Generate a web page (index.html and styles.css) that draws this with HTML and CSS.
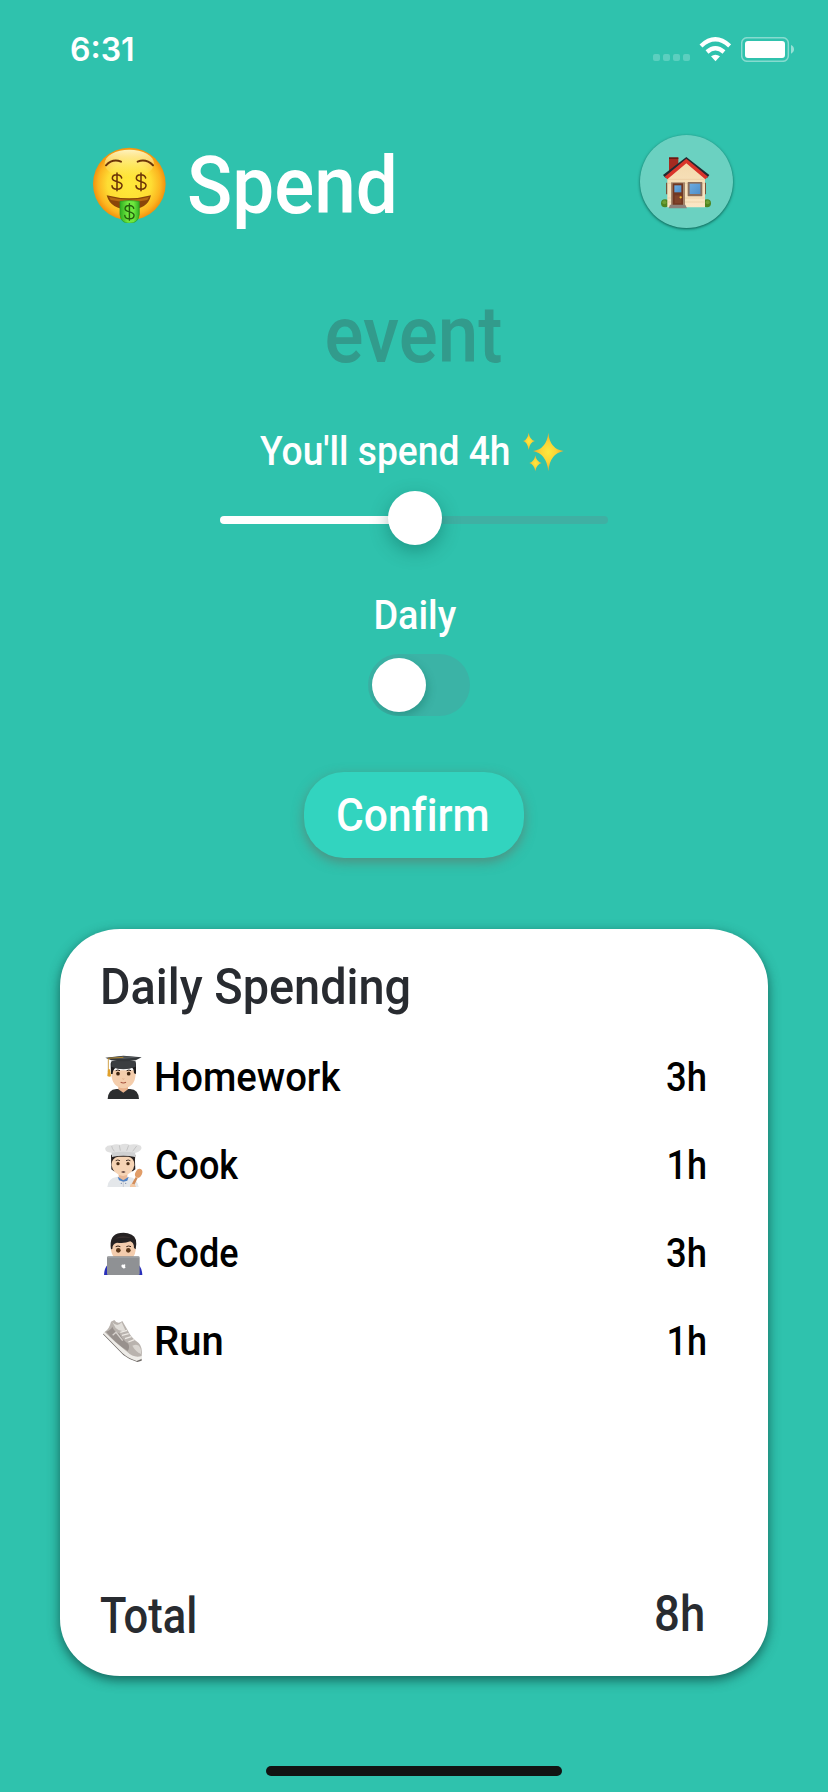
FILE: index.html
```html
<!DOCTYPE html>
<html lang="en">
<head>
<meta charset="utf-8">
<title>Spend</title>
<link rel="stylesheet" href="styles.css">
</head>
<body>
<div class="screen">
  <div class="status">
    <span class="time">6:31</span>
    <div class="indicators">
      <div class="dots"><i></i><i></i><i></i><i></i></div>
      <svg class="wifi" viewBox="237 50 98 75" fill="none" stroke="#fff" stroke-width="13">
        <path d="M243 77Q286 37 329 77"/><path d="M261 95Q286 73 312 95"/>
        <path d="M273 108Q286 99 300 108L286.500 123Z" fill="#fff" stroke="none"/>
      </svg>
      <svg class="battery" viewBox="363 51 160 75">
        <rect x="365" y="53" width="140" height="71" rx="17" fill="none" stroke="#fff" stroke-opacity=".42" stroke-width="4.500"/>
        <rect x="375" y="63" width="120" height="51" rx="9" fill="#fff"/>
        <path d="M513 75Q522 79 522 88T513 101Z" fill="#fff" fill-opacity=".5"/>
      </svg>
    </div>
  </div>

  <header class="header">
    <svg class="face" viewBox="98 50 220 230">
      <defs>
        <radialGradient id="skin" cx=".5" cy=".5" r=".5"><stop offset="0" stop-color="#ffe93a"/><stop offset=".6" stop-color="#fedd33"/><stop offset=".86" stop-color="#fcb41f"/><stop offset="1" stop-color="#f2920d"/></radialGradient>
        <linearGradient id="shine" x2="0" y2="1"><stop offset="0" stop-color="#fff8c8" stop-opacity=".95"/><stop offset="1" stop-color="#fff27a" stop-opacity="0"/></linearGradient>
        <linearGradient id="bill" x2="1" y2="0"><stop offset="0" stop-color="#2fae22"/><stop offset=".4" stop-color="#6fe83e"/><stop offset=".7" stop-color="#6fe83e"/><stop offset="1" stop-color="#2fae22"/></linearGradient>
      </defs>
      <circle cx="207" cy="161" r="109" fill="url(#skin)"/>
      <ellipse cx="207" cy="100" rx="74" ry="42" fill="url(#shine)"/>
      <path d="M137 105Q157 84 182 94M232 94Q257 84 278 105" fill="none" stroke="#6c3508" stroke-width="6" stroke-linecap="round"/>
      <path d="M139 195Q207 213 272 195Q262 238 207 238Q151 238 139 195Z" fill="#8a4609"/>
      <path d="M146 200Q207 216 266 200L261 209Q207 221 151 209Z" fill="#b56a12"/>
      <path d="M179 213Q207 208 237 213V252Q234 279 207 279Q181 279 179 252Z" fill="url(#bill)" stroke="#2a9d22" stroke-width="2"/>
      <g fill="none" stroke="#6b3307" stroke-width="4.600" stroke-linecap="round">
        <path id="dollar" d="M184 143C181 130 156 130 156 144C156 157 185 151 185 165C185 181 156 180 155 166M170 128V181"/>
        <use href="#dollar" x="72"/>
        <use href="#dollar" transform="translate(50 102) scale(.925)" stroke="#24600e"/>
      </g>
    </svg>
    <h1 class="title t">Spend</h1>
    <div class="home">
      <svg class="house" viewBox="120 410 156 160">
        <defs><linearGradient id="wall" x2="0" y2="1"><stop offset="0" stop-color="#f3d9ac"/><stop offset="1" stop-color="#fae6c5"/></linearGradient>
        <linearGradient id="pane" x2="1" y2="1"><stop offset="0" stop-color="#6cabe0"/><stop offset="1" stop-color="#4e8fcb"/></linearGradient></defs>
        <path d="M147 415H175V440L147 462Z" fill="#a52b20"/><path d="M147 414H175V419H147Z" fill="#6b1912"/>
        <circle cx="135" cy="552" r="12" fill="#4f8420"/><circle cx="261" cy="552" r="12" fill="#4f8420"/><circle cx="133" cy="549" r="6" fill="#6d9f35"/><circle cx="263" cy="549" r="6" fill="#6d9f35"/>
        <path d="M138 490H143V525H138ZM254 490H258V525H254Z" fill="#75543c"/>
        <path d="M142 470L199 424L255 470V564H142Z" fill="url(#wall)"/>
        <path d="M143 480H254M143 492H254M143 536H254M143 548H254" stroke="#e2c394" stroke-width="1.500"/>
        <path d="M129 467L199 413L268 467L262 475L199 423L136 475Z" fill="#222a31"/>
        <path d="M134 472L199 418L264 472L256 480L199 432L142 480Z" fill="#d9342b"/>
        <path d="M153 489H195V560H153Z" fill="#a3846a"/><path d="M158 492H189V557H158Z" fill="#713822"/>
        <path d="M163 498H184V519H163Z" fill="url(#pane)"/><path d="M164 528H184V552H164Z" fill="#81432a"/>
        <circle cx="182" cy="534" r="3.500" fill="#f6c331"/><path d="M150 556H196L201 567H146Z" fill="#8d817a"/>
        <rect x="203" y="488" width="44" height="43" rx="2" fill="#8b6f5c"/><rect x="209" y="493" width="32" height="31" fill="url(#pane)"/>
      </svg>
    </div>
  </header>

  <div class="event t">event</div>
  <div class="hours"><span class="hours-text t">You'll spend 4h</span>
    <svg class="sparkles" viewBox="970 425 122 118">
      <defs><radialGradient id="gold"><stop offset="0" stop-color="#ffe93e"/><stop offset=".5" stop-color="#fcd437"/><stop offset="1" stop-color="#f2a62a"/></radialGradient></defs>
      <g fill="url(#gold)">
        <path d="M1046 427Q1050 476 1092 482Q1050 490 1046 543Q1041 490 1000 482Q1041 476 1046 427Z"/>
        <path d="M987 427Q990 449 1006 452Q990 455 987 479Q984 455 970 452Q984 449 987 427Z"/>
        <path d="M1007 495Q1010 515 1026 518Q1010 522 1007 543Q1004 522 989 518Q1004 515 1007 495Z"/>
      </g>
    </svg>
  </div>
  <div class="slider"><div class="fill"></div><div class="thumb"></div></div>
  <div class="repeat t">Daily</div>
  <div class="toggle"><div class="knob"></div></div>
  <button class="confirm"><span class="confirm-text t">Confirm</span></button>

  <section class="card">
    <h2 class="heading t">Daily Spending</h2>
    <div class="row">
      <svg class="emoji" viewBox="36 45 123 132">
        <path d="M53 177Q54 149 79 147H120Q146 149 147 177Z" fill="#2c2d2f"/>
        <path d="M85 137H114V148L100 158L85 148Z" fill="#e8b28d"/>
        <path d="M64 91H137V102Q135 142 100 145Q66 142 64 102Z" fill="#f4cdac"/>
        <path d="M62 72Q62 64 72 64H128Q138 64 138 74V102L132 100Q132 84 122 81Q108 89 78 83Q68 88 68 102L63 102Z" fill="#1d1b1c"/>
        <path d="M64 64Q100 56 137 64V80Q100 95 64 80Z" fill="#3b3e41"/>
        <path d="M46 53L100 47L155 52L137 61Q100 67 64 61Z" fill="#34373a"/><path d="M52 53L100 49L147 52L100 57Z" fill="#555a5d"/>
        <path d="M100 52L55 55V96" fill="none" stroke="#c79027" stroke-width="2.500"/><path d="M54 88H60L63 109Q58 112 52 108Z" fill="#e0a02c"/>
        <circle cx="84" cy="101" r="5.500" fill="#3e230f"/><circle cx="116" cy="101" r="5.500" fill="#3e230f"/>
        <path d="M77 92Q83 88 90 92M110 92Q117 88 123 92" fill="none" stroke="#291b16" stroke-width="3"/>
        <path d="M92 127Q100 131 108 127" fill="none" stroke="#a85642" stroke-width="3.500"/><path d="M97 116Q100 119 103 116" fill="none" stroke="#d89b76" stroke-width="2"/>
      </svg>
      <span class="name homework t">Homework</span><span class="value t">3h</span></div>
    <div class="row">
      <svg class="emoji" viewBox="36 309 123 132">
        <path d="M52 441Q54 415 80 411H118Q140 413 146 441Z" fill="#e4e7ea"/>
        <path d="M86 396H112V414L100 425L86 414Z" fill="#e8b896"/><path d="M83 410L100 421L116 410L112 422L100 425L87 421Z" fill="#4d82c6"/>
        <path d="M100 425V441" stroke="#b9bec4" stroke-width="2"/><circle cx="94" cy="430" r="2" fill="#7c8fae"/><circle cx="107" cy="430" r="2" fill="#7c8fae"/>
        <path d="M64 345H134L136 388L128 394H72L64 388Z" fill="#231d1d"/>
        <path d="M65 352Q99 341 133 352V376Q130 402 99 408Q68 402 65 376Z" fill="#f6d4b5"/>
        <path d="M63 344L64 372Q68 352 84 350H115Q130 352 134 372L136 344Z" fill="#29211f"/>
        <path d="M64 333H136L135 351Q99 343 66 351Z" fill="#d0d1d2"/>
        <path d="M64 338Q43 337 46 323Q52 315 65 316Q77 310 91 314Q106 309 119 314Q138 311 152 317Q161 330 138 338Q98 332 64 338Z" fill="#e0e0e0"/>
        <path d="M65 318Q66 326 73 334M88 316L91 332M116 316L110 332M140 318L128 334" stroke="#b5b5b5" stroke-width="2" fill="none"/>
        <path d="M77 362Q83 358 90 362M108 362Q115 358 121 362" fill="none" stroke="#291b16" stroke-width="2.500"/>
        <circle cx="84" cy="371" r="5" fill="#4b2e17"/><circle cx="114" cy="371" r="5" fill="#4b2e17"/><path d="M93 396Q100 392 107 396Q100 400 93 396Z" fill="#402321"/>
        <path d="M120 441L137 411L143 414L130 441Z" fill="#d28c58"/><ellipse cx="146" cy="400" rx="10" ry="14" transform="rotate(25 146 400)" fill="#e19d68"/><path d="M122 432Q134 429 138 441H120Z" fill="#f3c9a5"/>
      </svg>
      <span class="name cook t">Cook</span><span class="value one t">1h</span></div>
    <div class="row">
      <svg class="emoji" viewBox="36 48 123 132">
        <path d="M42 180Q43 153 60 145H140Q156 155 157 180Z" fill="#292fba"/>
        <path d="M62 96Q63 76 72 72H128Q138 79 137 101Q137 117 128 127H72Q63 116 62 96Z" fill="#f3ccad"/>
        <path d="M63 103Q56 58 91 54Q109 51 125 59Q144 67 137 103L132 99Q132 83 121 79Q102 87 81 83Q67 85 67 102Z" fill="#252122"/>
        <path d="M75 71Q96 58 124 69Q99 66 75 71Z" fill="#3a302f"/>
        <circle cx="85" cy="106" r="7" fill="#5a371a"/><circle cx="115" cy="106" r="7" fill="#5a371a"/>
        <path d="M77 95Q84 91 91 95M109 95Q116 91 123 95" fill="none" stroke="#382318" stroke-width="3"/>
        <rect x="51" y="124" width="98" height="56" rx="4" fill="#8f9194"/><path d="M53 127H147" stroke="#a8aaad" stroke-width="2"/>
        <path d="M100 149Q106 145 106 151Q103 154 107 157Q102 163 99 159Q94 158 94 152Q96 147 100 149Z" fill="#fff"/>
      </svg>
      <span class="name cook t">Code</span><span class="value t">3h</span></div>
    <div class="row">
      <svg class="emoji" viewBox="36 312 123 132">
        <path d="M39 358L47 350L121 415L155 425V437L142 441Q119 435 100 420Z" fill="#6f6a67"/>
        <path d="M39 355L47 348L121 413L156 422V431L140 438Q116 431 97 414Z" fill="#eeece8"/>
        <path d="M44 351Q58 342 63 320L73 315Q83 330 97 318L114 347Q123 368 146 384Q159 397 155 423Q131 430 112 411Q76 383 44 351Z" fill="#b9b3ae"/>
        <path d="M67 321Q81 339 95 322L106 346Q91 352 77 339Z" fill="#e1ded9"/>
        <path d="M48 350Q62 346 67 335Q73 352 89 356Q97 374 115 386Q120 399 113 408Q77 385 48 350Z" fill="#98918d"/>
        <path d="M91 352L111 346M96 361L116 356M105 371L124 365M115 381L133 374" stroke="#eeeae5" stroke-width="4"/>
        <path d="M127 392Q145 385 151 398Q156 410 153 417Q137 410 127 392Z" fill="#d9d5d0"/><path d="M68 361L78 352L98 377" fill="none" stroke="#d6d1cc" stroke-width="4"/>
      </svg>
      <span class="name t">Run</span><span class="value one t">1h</span></div>
    <div class="total"><span class="total-text t">Total</span><span class="total-value t">8h</span></div>
  </section>
  <div class="home-bar"></div>
</div>
</body>
</html>
```
FILE: styles.css
```css
* { box-sizing: border-box; }
body { margin: 0; background: #2fc2ad; font-family: Roboto, "Liberation Sans", sans-serif; font-weight: 500; color: #fff; font-variant-ligatures: none; }
.screen { width: 828px; height: 1792px; display: flex; flex-direction: column; align-items: center; overflow: hidden; }
h1, h2 { margin: 0; font-weight: 500; }
/* Labels are condensed horizontally from their left edge */
.t { white-space: pre; transform-origin: left center; }

.status { width: 100%; height: 135px; padding: 37px 34px 0 70px; display: flex; justify-content: space-between; align-items: flex-start; }
.time { font: 600 32px/26px Inter, sans-serif; }
.indicators { display: flex; align-items: flex-start; }
.dots { display: flex; gap: 3px; padding-top: 17px; margin-right: 9px; }
.dots i { width: 7px; height: 7px; border-radius: 2px; background: #5bcfbf; }
.wifi { width: 32.667px; height: 25px; margin-right: 9.300px; }
.battery { width: 53.333px; height: 25px; }

.header { width: 100%; height: 93px; padding: 0 95.500px 0 92.700px; display: flex; align-items: flex-start; }
.face { width: 73.333px; height: 76.667px; margin-top: 11.500px; }
.title { font-size: 79px; line-height: 80px; margin: 11px 0 0 20.500px; transform: scaleX(.945); }
.home { width: 93px; height: 93px; margin-left: auto; border-radius: 50%; background: #6bd1c1; display: flex; align-items: center; justify-content: center; box-shadow: 0 1px 3px rgba(0, 60, 50, .75); }
.house { width: 52px; height: 53.333px; margin-top: 3px; }

.event { margin-top: 67px; font-size: 79px; line-height: 80px; color: #329b8c; transform-origin: center; transform: scaleX(.922); }
.hours { margin: 52px 4px 0 0; height: 48px; display: flex; justify-content: space-between; width: 304px; }
.hours-text { width: 248px; font-size: 40px; line-height: 49px; transform: scaleX(.93); }
.sparkles { width: 40.667px; height: 39.333px; margin-top: 5px; }

.slider { width: 388px; height: 54px; margin-top: 16px; position: relative; }
.slider::before { content: ""; position: absolute; left: 0; right: 0; top: 25px; height: 8px; border-radius: 4px; background: #3fb0a3; }
.fill { position: absolute; left: 0; top: 25px; width: 190px; height: 8px; border-radius: 4px; background: #fff; }
.thumb { position: absolute; left: 168px; top: 0; width: 54px; height: 54px; border-radius: 50%; background: #fff; box-shadow: 0 6px 18px rgba(0, 70, 60, .35); }

.repeat { margin: 47px 0 0 1px; font-size: 40px; line-height: 48px; transform-origin: center; transform: scaleX(.945); }
.toggle { width: 102px; height: 62px; margin: 14px 0 0 10px; padding: 4px; border-radius: 31px; background: #3bb3a6; overflow: hidden; }
.knob { width: 54px; height: 54px; border-radius: 50%; background: #fff; box-shadow: 2px 4px 8px rgba(0, 70, 60, .25); }
.confirm { width: 220px; height: 86px; margin-top: 56px; padding: 0 0 0 32px; border: 0; border-radius: 40px; background: #32d4bf; display: flex; align-items: center; font: inherit; color: #fff; box-shadow: 0 4px 12px rgba(110, 100, 90, .55); }
.confirm-text { font-size: 46px; transform: scaleX(.925); }

.card { width: 708px; height: 746.500px; margin-top: 71px; padding: 28px 61px 30px 40px; border-radius: 60px / 57px; background: #fff; color: #000; display: flex; flex-direction: column; align-items: stretch; box-shadow: 0 4px 12px rgba(10, 60, 55, .7); }
.heading { font-size: 50px; line-height: 60px; margin: 0 0 16px 0; color: #282b30; width: max-content; transform: scaleX(.937); }
.row { height: 88px; display: flex; align-items: center; }
.emoji { width: 41px; height: 44px; margin-left: 2px; }
.name { font-size: 40px; line-height: 48px; margin: 2px 0 0 11px; }
.homework { transform: scaleX(.957); }
.cook { transform: scaleX(.9); margin-left: 12px; }
.value { font-size: 40px; line-height: 48px; margin: 2px 0 0 auto; transform-origin: right center; transform: scaleX(.91); }
.one { transform: scaleX(.9); }
.total { margin-top: auto; display: flex; justify-content: space-between; font-size: 50px; line-height: 60px; color: #282b30; }
.total-text { transform: scaleX(.87); }
.total-value { margin: -2px 2px 2px 0; transform-origin: right center; transform: scaleX(.91); }
.home-bar { width: 296px; height: 10px; margin-top: 90.500px; border-radius: 5px; background: #111312; }
```
